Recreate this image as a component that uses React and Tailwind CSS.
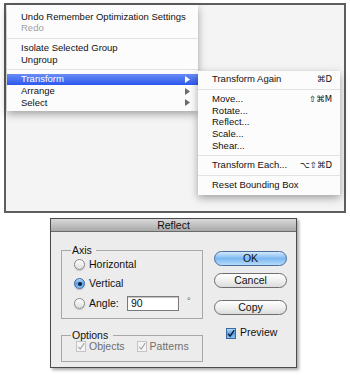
import React from "react";

const Arrow = ({ white }) => (
  <svg width="5" height="7" viewBox="0 0 5 7" className="shrink-0">
    <polygon points="0,0 5,3.5 0,7" fill={white ? "#ffffff" : "#6b6b6b"} />
  </svg>
);

const Item = ({ children, gray }) => (
  <div className={`h-[11.7px] flex items-center pl-[14px] pr-[8px] ${gray ? "text-[#a0a0a0]" : "text-[#111]"}`}>
    {children}
  </div>
);

const Sep = () => (
  <div className="h-[8px] flex items-center">
    <div className="h-px w-full bg-[#e2e2e2]" />
  </div>
);

const SubItem = ({ label, sc }) => (
  <div className="h-[11.7px] flex items-center justify-between pl-[14px] pr-[8px] text-[#111]">
    <span>{label}</span>
    {sc && <span className="font-['DejaVu_Sans',sans-serif] text-[8.5px]">{sc}</span>}
  </div>
);

const Radio = ({ on }) =>
  on ? (
    <div className="w-[11px] h-[11px] rounded-full border border-[#3b6aa0] bg-gradient-to-b from-[#b7d9f7] via-[#5a9ee6] to-[#8cc2f2] flex items-center justify-center shadow-[0_1px_1px_rgba(0,0,0,0.2)]">
      <div className="w-[4px] h-[4px] rounded-full bg-[#10203a]" />
    </div>
  ) : (
    <div className="w-[11px] h-[11px] rounded-full border border-[#8a8a8a] bg-gradient-to-b from-white to-[#dedede] shadow-[0_1px_1px_rgba(0,0,0,0.15)]" />
  );

const Check = ({ disabled }) =>
  disabled ? (
    <div className="w-[10px] h-[11px] border border-[#c4c4c4] bg-[#f4f4f4] flex items-center justify-center">
      <svg width="9" height="9" viewBox="0 0 10 10">
        <path d="M1.5 5.5 L4 8.2 L9 0.8" fill="none" stroke="#a8a8a8" strokeWidth="1.5" />
      </svg>
    </div>
  ) : (
    <div className="w-[10px] h-[11px] border border-[#3b6aa0] bg-gradient-to-b from-[#b7d9f7] via-[#5a9ee6] to-[#8cc2f2] flex items-center justify-center">
      <svg width="9" height="9" viewBox="0 0 10 10">
        <path d="M1.5 5.5 L4 8.2 L9 0.8" fill="none" stroke="#0d1a2e" strokeWidth="1.8" />
      </svg>
    </div>
  );

const Btn = ({ children, primary, className = "" }) => (
  <div
    className={`h-[15px] w-[73px] rounded-full border flex items-center justify-center text-[10.5px] leading-none text-[#111] ${
      primary
        ? "border-[#4a6d9c] bg-gradient-to-b from-[#d4e9fc] via-[#7cb8f0] to-[#b5dbfb]"
        : "border-[#6e6e6e] bg-gradient-to-b from-white via-[#f0f0f0] to-[#dcdcdc]"
    } ${className}`}
  >
    {children}
  </div>
);

export default function App() {
  return (
    <div className="w-[350px] h-[375px] bg-white overflow-hidden font-['Liberation_Sans','DejaVu_Sans',sans-serif] pt-[3px]">
      {/* top canvas panel */}
      <div className="relative ml-[4px] w-[342px] h-[210px] border-2 border-[#5e5e5e] bg-[#f4f4f4]">
        {/* main menu */}
        <div className="absolute left-[1px] top-0 w-[191px] pt-[5.8px] pb-[2.4px] bg-[#fcfcfc] text-[9.5px] shadow-[0_3px_8px_rgba(0,0,0,0.35)]">
          <Item>Undo Remember Optimization Settings</Item>
          <Item gray>Redo</Item>
          <Sep />
          <Item>Isolate Selected Group</Item>
          <Item>Ungroup</Item>
          <Sep />
          <div className="h-[11.7px] flex items-center justify-between pl-[14px] pr-[8px] text-white bg-gradient-to-b from-[#6a8cf5] to-[#2c57ee]">
            <span>Transform</span>
            <Arrow white />
          </div>
          <div className="h-[11.7px] flex items-center justify-between pl-[14px] pr-[8px] text-[#111]">
            <span>Arrange</span>
            <Arrow />
          </div>
          <div className="h-[11.7px] flex items-center justify-between pl-[14px] pr-[8px] text-[#111]">
            <span>Select</span>
            <Arrow />
          </div>
        </div>
        {/* submenu */}
        <div className="absolute left-[192px] top-[66px] w-[142px] pt-[2.5px] pb-[3.5px] bg-[#fcfcfc] text-[9.5px] shadow-[0_3px_8px_rgba(0,0,0,0.35)]">
          <SubItem label="Transform Again" sc="⌘D" />
          <Sep />
          <SubItem label="Move..." sc="⇧⌘M" />
          <SubItem label="Rotate..." />
          <SubItem label="Reflect..." />
          <SubItem label="Scale..." />
          <SubItem label="Shear..." />
          <Sep />
          <SubItem label="Transform Each..." sc="⌥⇧⌘D" />
          <Sep />
          <SubItem label="Reset Bounding Box" />
        </div>
      </div>

      {/* Reflect dialog */}
      <div className="ml-[50px] mt-[5px] w-[247px] h-[150px] border border-[#4a4a4a] bg-[#ececec] shadow-[2px_2px_3px_rgba(0,0,0,0.35)] flex flex-col">
        <div className="h-[13px] border-b border-[#6a6a6a] bg-gradient-to-b from-[#d9d9d9] to-[#a9a9a9] text-center text-[10.5px] leading-[12px] text-[#111]">
          Reflect
        </div>
        <div className="flex pl-[10px] pt-[12px] text-[10.5px] text-[#111]">
          <div className="w-[142px] flex flex-col">
            <fieldset className="h-[75px] border border-[#a8a8a8] pl-[12px]">
              <legend className="ml-[-3px] pl-[1px] pr-[4px] leading-[12px]">Axis</legend>
              <div className="pt-[2px] flex flex-col">
                <div className="h-[13px] flex items-center gap-[4px]">
                  <Radio />
                  <span>Horizontal</span>
                </div>
                <div className="h-[13px] mt-[6px] flex items-center gap-[4px]">
                  <Radio on />
                  <span>Vertical</span>
                </div>
                <div className="h-[15px] mt-[6px] flex items-center">
                  <Radio />
                  <span className="ml-[4px] w-[38px]">Angle:</span>
                  <div className="w-[52px] h-[15px] border border-[#7a7a7a] bg-white shadow-[inset_0_1px_1px_rgba(0,0,0,0.25)] flex items-center pl-[3px]">
                    90
                  </div>
                  <span className="ml-[8px] self-start text-[9px] leading-[10px] text-[#555]">°</span>
                </div>
              </div>
            </fieldset>
            <fieldset className="mt-[10px] h-[33px] border border-[#a8a8a8] pl-[12px]">
              <legend className="ml-[-3px] pl-[1px] pr-[5px] leading-[12px]">Options</legend>
              <div className="h-[11px] flex items-center text-[#6e6e6e]">
                <div className="ml-[2px]">
                  <Check disabled />
                </div>
                <span className="ml-[3px]">Objects</span>
                <div className="ml-[12px]">
                  <Check disabled />
                </div>
                <span className="ml-[3px]">Patterns</span>
              </div>
            </fieldset>
          </div>
          <div className="ml-[11px] w-[73px] pt-[7px] flex flex-col">
            <Btn primary>OK</Btn>
            <Btn className="mt-[7px]">Cancel</Btn>
            <Btn className="mt-[12px]">Copy</Btn>
            <div className="mt-[12px] h-[12px] flex items-center ml-[12px]">
              <Check />
              <span className="ml-[4px]">Preview</span>
            </div>
          </div>
        </div>
      </div>
    </div>
  );
}
